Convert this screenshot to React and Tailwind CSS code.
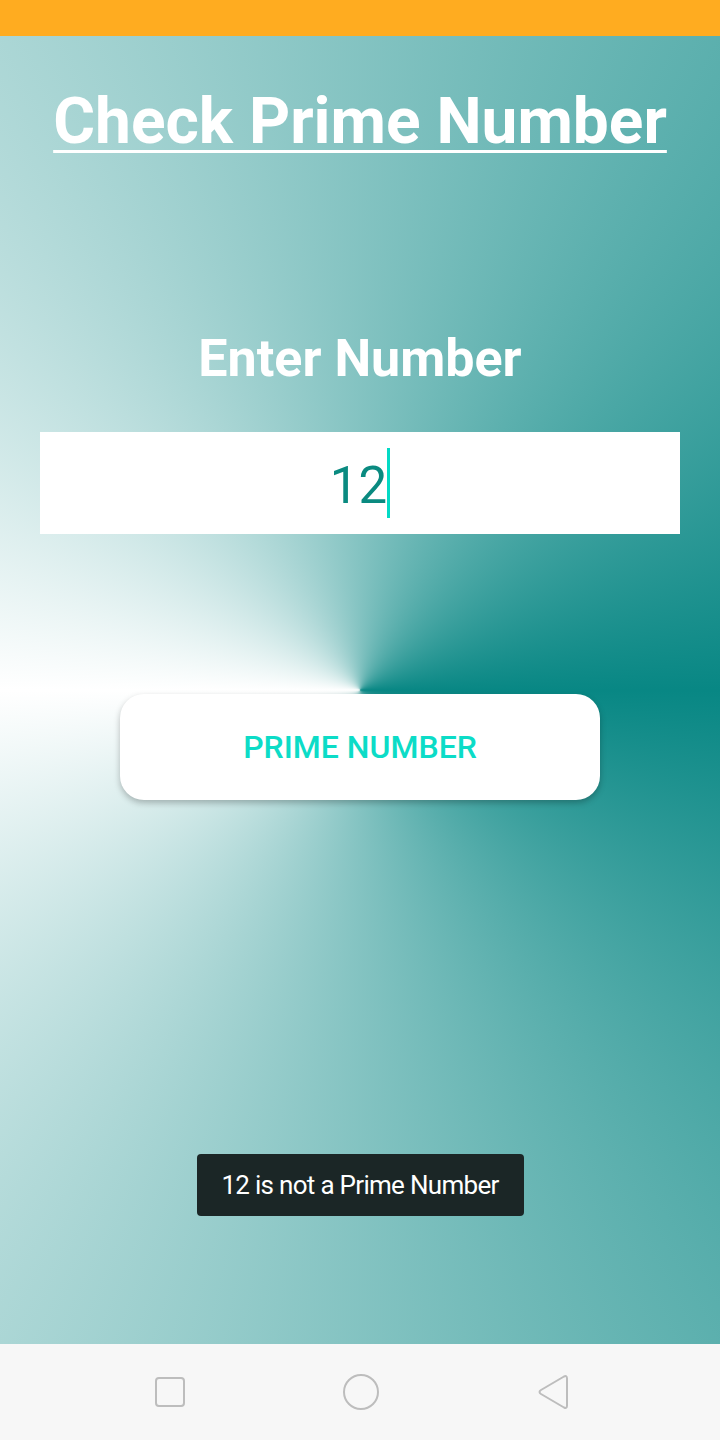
export default function App() {
  return (
    <div className="w-[720px] h-[1440px] flex flex-col overflow-hidden" style={{ fontFamily: "Roboto, 'Noto Sans', sans-serif" }}>
      <div className="h-9 bg-[#ffac20] shrink-0" />
      <div className="flex-1 flex flex-col items-center bg-[conic-gradient(from_90deg_at_360px_654px,#088784,#ffffff_50%,#088784)]">
        <h1 className="mt-[54px] text-[64px] leading-[64px] font-bold text-white underline decoration-[3px] underline-offset-[7px]">
          Check Prime Number
        </h1>
        <h2 className="mt-[179px] text-[52px] leading-[51px] font-bold text-white">Enter Number</h2>
        <div className="mt-[48px] w-[640px] h-[102px] bg-white flex items-center justify-center">
          <span className="text-[51px] leading-[60px] text-[#0a8a80] pt-[5px]">12</span>
          <span className="w-[3px] h-[70px] bg-[#03dac5]" />
        </div>
        <button className="mt-[160px] w-[480px] h-[106px] bg-white rounded-[24px] shadow-[0_3px_6px_rgba(0,0,0,0.25)] flex items-center justify-center">
          <span className="text-[32px] leading-[32px] font-medium text-[#0cdcc7]">PRIME NUMBER</span>
        </button>
        <div className="mt-[354px] w-[327px] h-[62px] rounded-[4px] bg-[#1b2626] flex items-center justify-center">
          <span className="text-[26px] leading-[26px] tracking-[-0.7px] text-white">12 is not a Prime Number</span>
        </div>
      </div>
      <div className="h-24 bg-[#f7f7f7] shrink-0 flex items-center">
        <div className="w-full flex items-center justify-between px-[154px] pr-[150px]">
          <svg width="32" height="32" viewBox="0 0 32 32">
            <rect x="2" y="2" width="28" height="28" rx="3" fill="none" stroke="#bdbdbd" strokeWidth="2" />
          </svg>
          <svg width="38" height="38" viewBox="0 0 38 38">
            <circle cx="19" cy="19" r="17" fill="none" stroke="#bdbdbd" strokeWidth="2" />
          </svg>
          <svg width="34" height="38" viewBox="0 0 34 38">
            <path d="M28 3.5 Q31 2 31 5.5 L31 32.5 Q31 36 28 34.5 L5 21 Q2 19 5 17 Z" fill="none" stroke="#bdbdbd" strokeWidth="2" strokeLinejoin="round" />
          </svg>
        </div>
      </div>
    </div>
  );
}
